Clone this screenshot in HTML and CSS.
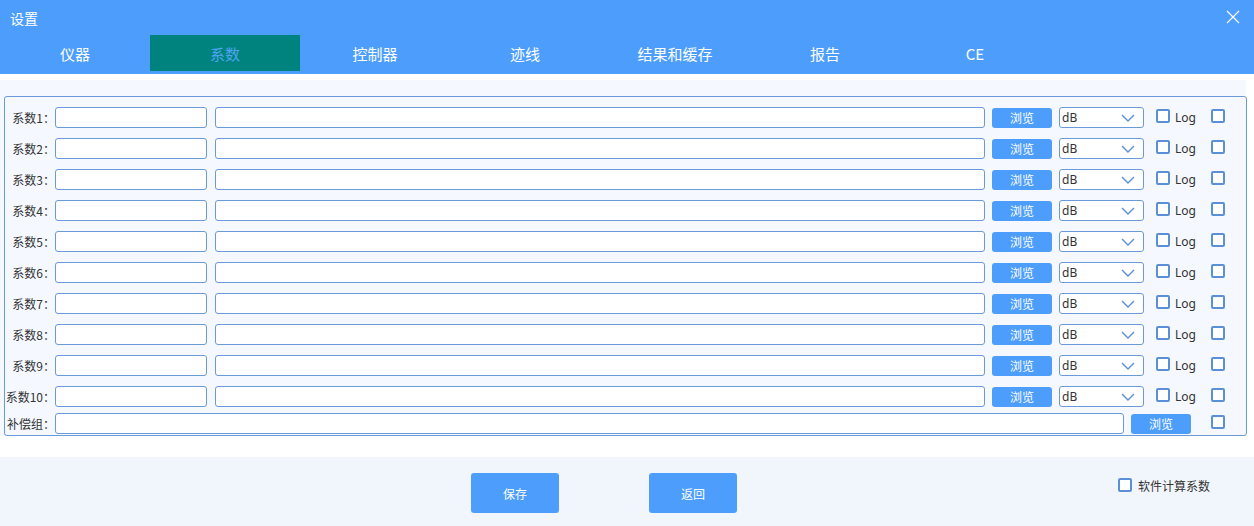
FILE: index.html
```html
<!DOCTYPE html>
<html>
<head>
    <meta charset="UTF-8">
    <meta name="viewport" content="width=device-width, initial-scale=1.0">
    <title>设置</title>
    <link rel="stylesheet" href="styles.css">
</head>
<body>
    <!-- 标题栏 + 选项卡 -->
    <div class="header">
        <div class="title_row">
            <span class="title">设置</span>
            <svg class="close" width="14" height="14" viewBox="0 0 14 14">
                <path d="M1 1 L13 13 M13 1 L1 13" stroke="#fff" stroke-width="1.2" fill="none"/>
            </svg>
        </div>
        <div class="tabs">
            <span class="tab">仪器</span>
            <span class="tab active">系数</span>
            <span class="tab">控制器</span>
            <span class="tab">迹线</span>
            <span class="tab">结果和缓存</span>
            <span class="tab">报告</span>
            <span class="tab">CE</span>
        </div>
    </div>

    <!-- 系数设置区域 -->
    <div class="content">
        <div class="panel">
            <div class="row"><label>系数1：</label><input class="name"><input class="path"><button class="btn_browse">浏览</button><div class="select">dB<svg class="arrow" width="14" height="8" viewBox="0 0 14 8"><path d="M1 1 L7 7 L13 1" stroke="#5a90d6" stroke-width="1.4" fill="none"/></svg></div><span class="check"></span><span class="log">Log</span><span class="check last"></span></div>
            <div class="row"><label>系数2：</label><input class="name"><input class="path"><button class="btn_browse">浏览</button><div class="select">dB<svg class="arrow" width="14" height="8" viewBox="0 0 14 8"><path d="M1 1 L7 7 L13 1" stroke="#5a90d6" stroke-width="1.4" fill="none"/></svg></div><span class="check"></span><span class="log">Log</span><span class="check last"></span></div>
            <div class="row"><label>系数3：</label><input class="name"><input class="path"><button class="btn_browse">浏览</button><div class="select">dB<svg class="arrow" width="14" height="8" viewBox="0 0 14 8"><path d="M1 1 L7 7 L13 1" stroke="#5a90d6" stroke-width="1.4" fill="none"/></svg></div><span class="check"></span><span class="log">Log</span><span class="check last"></span></div>
            <div class="row"><label>系数4：</label><input class="name"><input class="path"><button class="btn_browse">浏览</button><div class="select">dB<svg class="arrow" width="14" height="8" viewBox="0 0 14 8"><path d="M1 1 L7 7 L13 1" stroke="#5a90d6" stroke-width="1.4" fill="none"/></svg></div><span class="check"></span><span class="log">Log</span><span class="check last"></span></div>
            <div class="row"><label>系数5：</label><input class="name"><input class="path"><button class="btn_browse">浏览</button><div class="select">dB<svg class="arrow" width="14" height="8" viewBox="0 0 14 8"><path d="M1 1 L7 7 L13 1" stroke="#5a90d6" stroke-width="1.4" fill="none"/></svg></div><span class="check"></span><span class="log">Log</span><span class="check last"></span></div>
            <div class="row"><label>系数6：</label><input class="name"><input class="path"><button class="btn_browse">浏览</button><div class="select">dB<svg class="arrow" width="14" height="8" viewBox="0 0 14 8"><path d="M1 1 L7 7 L13 1" stroke="#5a90d6" stroke-width="1.4" fill="none"/></svg></div><span class="check"></span><span class="log">Log</span><span class="check last"></span></div>
            <div class="row"><label>系数7：</label><input class="name"><input class="path"><button class="btn_browse">浏览</button><div class="select">dB<svg class="arrow" width="14" height="8" viewBox="0 0 14 8"><path d="M1 1 L7 7 L13 1" stroke="#5a90d6" stroke-width="1.4" fill="none"/></svg></div><span class="check"></span><span class="log">Log</span><span class="check last"></span></div>
            <div class="row"><label>系数8：</label><input class="name"><input class="path"><button class="btn_browse">浏览</button><div class="select">dB<svg class="arrow" width="14" height="8" viewBox="0 0 14 8"><path d="M1 1 L7 7 L13 1" stroke="#5a90d6" stroke-width="1.4" fill="none"/></svg></div><span class="check"></span><span class="log">Log</span><span class="check last"></span></div>
            <div class="row"><label>系数9：</label><input class="name"><input class="path"><button class="btn_browse">浏览</button><div class="select">dB<svg class="arrow" width="14" height="8" viewBox="0 0 14 8"><path d="M1 1 L7 7 L13 1" stroke="#5a90d6" stroke-width="1.4" fill="none"/></svg></div><span class="check"></span><span class="log">Log</span><span class="check last"></span></div>
            <div class="row"><label>系数10：</label><input class="name"><input class="path"><button class="btn_browse">浏览</button><div class="select">dB<svg class="arrow" width="14" height="8" viewBox="0 0 14 8"><path d="M1 1 L7 7 L13 1" stroke="#5a90d6" stroke-width="1.4" fill="none"/></svg></div><span class="check"></span><span class="log">Log</span><span class="check last"></span></div>
            <div class="row comp_row"><label>补偿组：</label><input class="comp"><button class="btn_browse">浏览</button><span class="check last"></span></div>
        </div>
    </div>

    <!-- 底部按钮 -->
    <div class="footer">
        <button class="btn_main">保存</button>
        <button class="btn_main">返回</button>
        <div class="soft_calc"><span class="check"></span><span>软件计算系数</span></div>
    </div>
</body>
</html>
```

FILE: styles.css
```css
/*公共样式*/
*{margin:0px;padding:0px;box-sizing:border-box;}
html,body{width:100%;height:100%;}
body{background:#fff;font-family:"Noto Sans CJK SC","Noto Sans",sans-serif;font-size:12px;color:#333;overflow:hidden;}

/*标题栏*/
.header{height:74px;background:#4d9efc;}
.title_row{height:35px;display:flex;justify-content:space-between;align-items:center;padding:0 14px 0 10px;}
.title{font-size:14px;color:#fff;}
.close{display:block;margin-top:-2px;}

/*选项卡*/
.tabs{height:36px;display:flex;}
.tab{width:150px;display:flex;justify-content:center;align-items:center;font-size:15px;color:#fff;}
.tab.active{background:#00837e;color:#4fa3f2;}

/*系数区域*/
.content{width:1246px;margin-top:6px;padding:16px 0 0 4px;background:#f5f9ff;}
.panel{width:1243px;border:1px solid #6a9ad8;border-radius:3px;padding:10px 0 1px 0;display:flex;flex-direction:column;gap:10px;}
.row{height:21px;display:flex;align-items:center;}
.row label{width:50px;text-align:right;white-space:nowrap;font-size:12px;color:#333;}
.row input{height:21px;background:#fff;border:1px solid #6a9ad8;border-radius:3px;outline:none;}
.row .name{width:152px;}
.row .path{width:770px;margin-left:8px;}
.row .comp{width:1069px;}
.comp_row{margin-top:-4px;}
.btn_browse{width:60px;height:20px;margin-left:7px;border:none;border-radius:3px;background:#4d9efc;color:#fff;font-family:inherit;font-size:12px;}
.select{width:85px;height:21px;margin-left:7px;background:#fff;border:1px solid #6a9ad8;border-radius:3px;display:flex;align-items:center;justify-content:space-between;padding:0 8px 0 2px;font-family:"Noto Sans",sans-serif;font-size:12px;color:#333;}
.arrow{display:block;}

/*复选框*/
.check{width:14px;height:14px;border:2px solid #5b90d6;border-radius:2px;background:#fff;display:inline-block;}
.row .check{margin-left:12px;margin-top:-4px;}
.log{margin-left:5px;font-family:"Noto Sans",sans-serif;font-size:12px;color:#333;}
.row .check.last{margin-left:15px;}
.comp_row .check.last{margin-left:20px;}

/*底部*/
.footer{height:69px;margin-top:21px;background:#f1f6fd;display:flex;padding-top:16px;padding-left:471px;}
.btn_main{width:88px;height:40px;border:none;border-radius:3px;background:#4d9efc;color:#fff;font-family:inherit;font-size:12px;margin-right:90px;}
.soft_calc{display:flex;align-items:center;gap:6px;margin-left:291px;margin-top:-8px;height:40px;font-size:12px;color:#333;}
```
